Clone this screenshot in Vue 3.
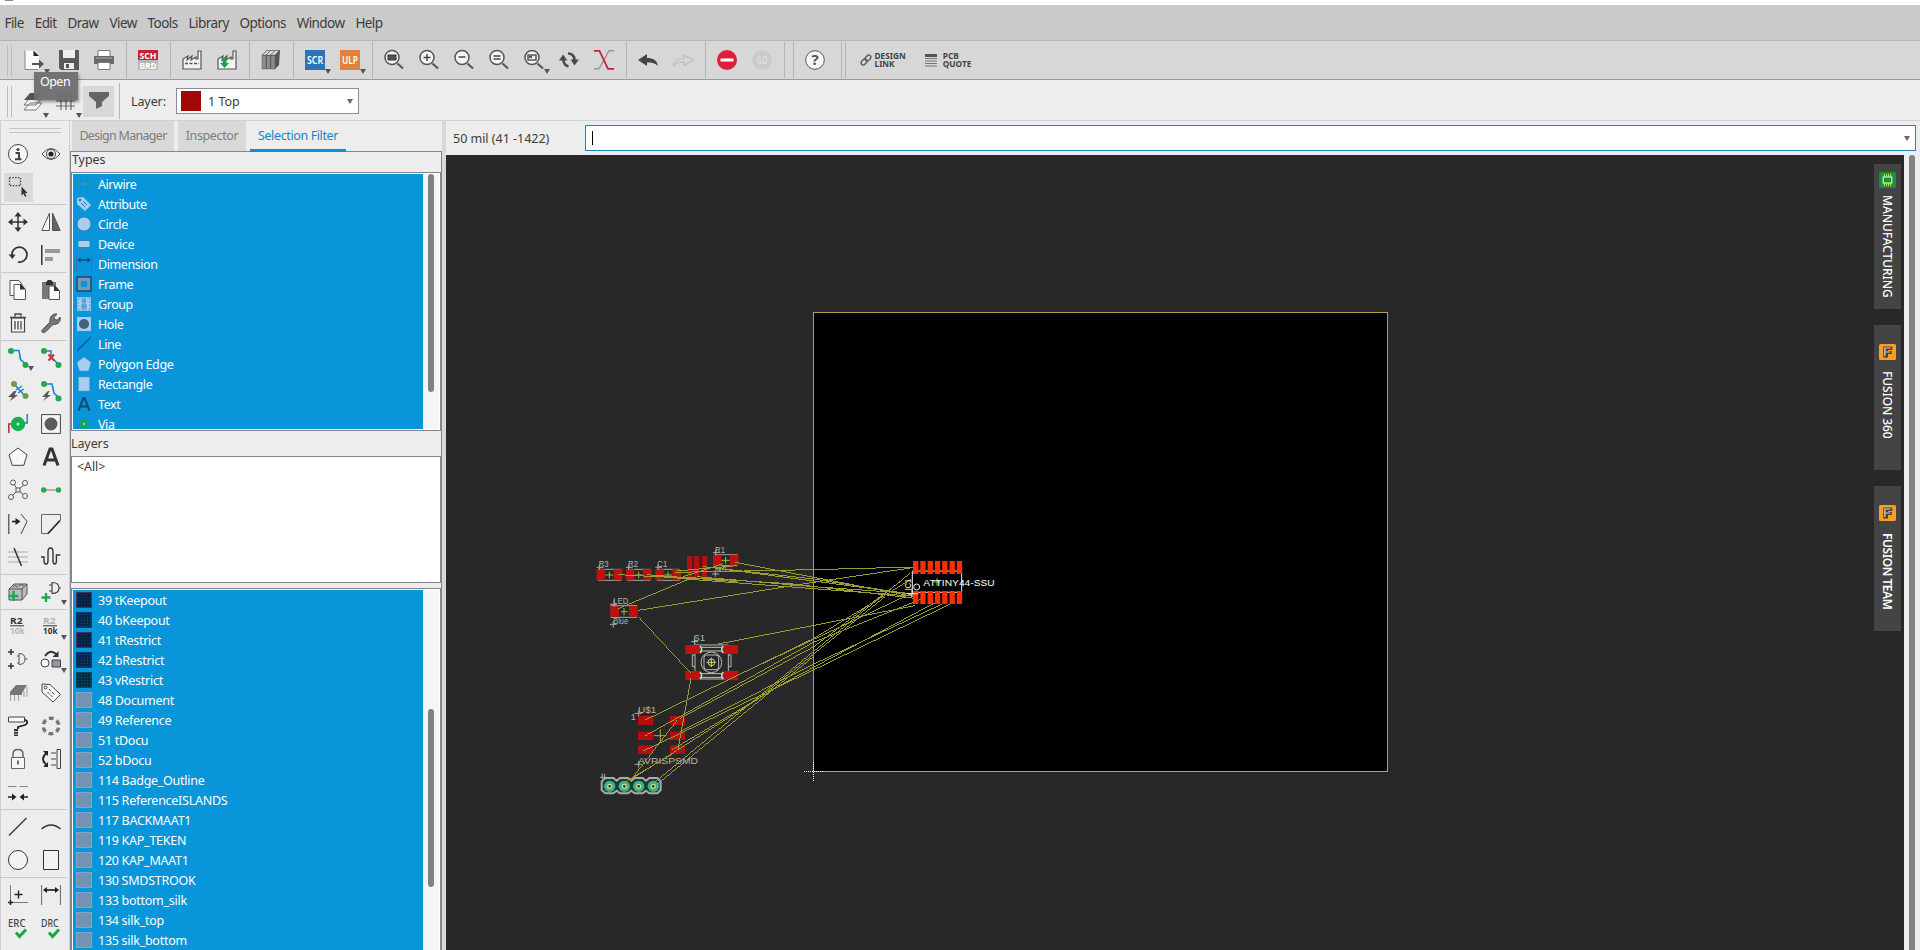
<script setup>
const menus = ['File', 'Edit', 'Draw', 'View', 'Tools', 'Library', 'Options', 'Window', 'Help']

const lens = '<path d="M13.5 13.5l5.5 5" stroke="#555" stroke-width="2"/><circle cx="8" cy="7.500" r="7" fill="#f4f4f4" stroke="#555" stroke-width="1.500"/>'
const green = (x, y, r = 3) => `<circle cx="${x}" cy="${y}" r="${r}" fill="#22a84e"/>`
const factory = '<path d="M1 19V9l5-3-1 4 5-4-1 4 5-3v2h2V1h3v18z" fill="#f3f3f3" stroke="#555" stroke-width="1.200"/>'
const label = (x, y, size, w, fill, t, weight = 700) =>
  `<text x="${x}" y="${y}" font-size="${size}" font-weight="${weight}" fill="${fill}" textLength="${w}" lengthAdjust="spacingAndGlyphs">${t}</text>`
const check = '<path d="M8 14.500l3.500 4L18 11.500" fill="none" stroke="#19a64b" stroke-width="3"/>'

const icons = {
  open: '<path d="M1 .5h10l4 5v14H1z" fill="#fbfbfb"/><path d="M1 .5v19h13" fill="none" stroke="#888"/><path d="M9.500 .5l5.500 5.500H9.500z" fill="#222"/><path d="M8 13h7v-3.500l5 4.500-5 4.500V15H8z" fill="#555"/>',
  save: '<path d="M0 0h20v20H2l-2-2z" fill="#595959"/><path d="M4 0h12v8H4zM5 13h10v6H5z" fill="#eee"/><path d="M7 14h3v4H7z" fill="#555"/>',
  print: '<path d="M4 .5h12v6H4z" fill="#fff" stroke="#777"/><path d="M0 6h20v8H0z" fill="#6a6a6a"/><path d="M2 8h16" stroke="#aaa"/><path d="M4 12.500h12v7H4z" fill="#fff" stroke="#777"/>',
  sch: '<path d="M0 0h20v10H0z" fill="#c8202c"/><path d="M0 10h20v10H0z" fill="#b9b9b9"/>' + label(1.5, 8.6, 9.5, 17, '#fff', 'SCH') + label(1.5, 18.6, 9.5, 17, '#fff', 'BRD'),
  fac1: factory + '<path d="M3 13.500h14" stroke="#555" stroke-width="1.500" stroke-dasharray="3 1.500"/>',
  fac2: factory + '<path d="M5.500 8h4v5H12l-4.500 5L3 13h2.500z" fill="#1aa64a"/>',
  books: '<path d="M1 5l5-5h13l-1 15-4 4H1z" fill="#555"/><path d="M1.500 5l4.500-4.500h12L14 5z" fill="#ddd" stroke="#666" stroke-width=".5"/><path d="M1 5.500h4V19H1zM5.500 5.500h4V19h-4zM10 5.500h4V19h-4z" fill="#8c8c8c" stroke="#555" stroke-width=".5"/><path d="M5 5L9.500.5M9.500 5L14 .5" stroke="#666"/>',
  scr: '<path d="M0 0h20v20H0z" fill="#2d72ba"/>' + label(2, 13.6, 10, 16, '#fff', 'SCR', 600),
  ulp: '<path d="M0 0h20v20H0z" fill="#e0823b"/>' + label(2, 13.6, 10, 16, '#fff', 'ULP', 600),
  zfit: lens + '<path d="M4 5h8v5H4z" fill="#555" stroke="#333"/>',
  zin: lens + '<path d="M4.500 7.500h7M8 4v7" stroke="#444" stroke-width="1.500"/>',
  zout: lens + '<path d="M4.500 7h7" stroke="#444" stroke-width="1.500"/>',
  zeq: lens + '<path d="M4.500 6h7M4.500 9h7" stroke="#444" stroke-width="1.500"/>',
  zsel: lens + '<path d="M4 5h8v5H4z" fill="#eee" stroke="#555" stroke-width="1.500"/><path d="M5 6h3v2H5z" fill="#555"/>',
  refresh: '<path d="M9.500 16.500Q4.500 15 4.300 9.500M9 3.500Q15.200 3.500 15.700 10.500" fill="none" stroke="#4a4a4a" stroke-width="2.600"/><path d="M0 10.500h8.500L4 4.500zM11.500 9.500H20l-4.500 6z" fill="#4a4a4a"/>',
  cross: '<path d="M20 .8h-5l-10 18H0" fill="none" stroke="#999" stroke-width="1.500"/><path d="M0 .8h5.500l8.500 18h6" fill="none" stroke="#d02030" stroke-width="1.800"/>',
  undo: '<path d="M0 10l9-6v4c6 0 10 2 11 8-3-3-6-3.500-11-3.500V16z" fill="#444"/>',
  redo: '<path d="M20 10l-9-5v3.500C5 8.500 2 10 .5 15.500 4 12.500 7 12 11 12v3.500z" fill="none" stroke="#bcbcbc" stroke-width="1.200"/>',
  stop: '<circle cx="10" cy="10" r="10" fill="#dc1f3b"/><path d="M3.500 10h13" stroke="#fff" stroke-width="3"/>',
  go: '<circle cx="10" cy="10" r="9.800" fill="#cbcbcb"/>' + label(4.5, 13.6, 10, 11, '#dedede', 'GO', 600),
  help: '<circle cx="10" cy="10" r="9.300" fill="#f7f7f7" stroke="#555"/>' + label(6.4, 15, 14, 7.2, '#555', '?'),
  layers: '<path d="M1 19l6-7h12l-6 7zM1 14l6-7h12l-6 7z" fill="#f5f5f5" stroke="#777"/><path d="M1 9l6-7h12l-6 7z" fill="#555"/>',
  grid: '<path d="M5 1v18M10 1v18M15 1v18M0 5h19M0 10h19M0 15h19" stroke="#666" stroke-width="1.200" fill="none"/>',
  funnel: '<path d="M0 1h20v4l-7 6v4l-6 3v-7L0 5z" fill="#656565"/>',
  info: '<circle cx="10" cy="10" r="9.500" fill="#f7f7f7" stroke="#444"/><circle cx="10" cy="5.500" r="1.600" fill="#444"/><path d="M7.500 9H11v6M7 15.200h6.500" stroke="#444" stroke-width="2" fill="none"/>',
  eye: '<path d="M1 10Q10-1 19 10 10 21 1 10z" fill="#f7f7f7" stroke="#444"/><circle cx="10" cy="10" r="4.500" fill="none" stroke="#555" stroke-width="1.200"/><circle cx="10" cy="10" r="2.600" fill="#222"/>',
  select: '<path d="M1.500 .7h11v8h-11z" fill="none" stroke="#444" stroke-width="1.300" stroke-dasharray="1.500 1.300"/><path d="M13.500 9.500v9l2-1.800 1.500 3 1.500-.8-1.500-2.800h2.500z" fill="#333"/>',
  move: '<path d="M2 10h16M10 2v16" stroke="#333" stroke-width="1.500"/><path d="M10 0l3.500 4.500h-7zM10 20l3.500-4.500h-7zM0 10l4.500-3.500v7zM20 10l-4.500-3.500v7z" fill="#333"/>',
  mirror: '<path d="M8.500 1v17.500H.8z" fill="#f7f7f7" stroke="#555"/><path d="M11.500 1v17.500h7.700z" fill="#666" stroke="#555"/>',
  rotate: '<path d="M4 10.500a7.500 7.500 0 1 1 6 6.500" fill="none" stroke="#333" stroke-width="1.700"/><path d="M.5 9.500h7l-3 4.500z" fill="#333"/>',
  align: '<path d="M.8 0v20" stroke="#333" stroke-width="1.500"/><path d="M4 4h15v4H4zM4 12h8v4H4z" fill="#999"/>',
  copy: '<path d="M2 .5h9l3 4v11H2z" fill="#fafafa" stroke="#555"/><path d="M6 4.500h7l4.500 5v10H6z" fill="#fafafa" stroke="#555"/><path d="M12 4.500h1.500l4 5H12z" fill="#333"/>',
  paste: '<path d="M1 2h14v17H1z" fill="#777"/><path d="M5 2l2-2h3l2 2v3H5z" fill="#333"/><path d="M8 6h6l4.500 5v8.500H8z" fill="#fafafa" stroke="#555"/><path d="M13 6h1.500l4 5H13z" fill="#333"/>',
  trash: '<path d="M3.500 5h13v14h-13z" fill="#f5f5f5" stroke="#444" stroke-width="1.200"/><path d="M2 4.500h16M7 3.500V1h6v2.500M7 8v8.500M10 8v8.500M13 8v8.500" stroke="#444" stroke-width="1.300" fill="none"/>',
  wrench: '<path d="M1 17l8-8c-1-5 3-9 7-8l-3 3.500 1 2 2.500.5L19 4c1.500 4-2 8-7 7.500l-8 8c-3 .5-4-1-3-2.500z" fill="#777" stroke="#444" stroke-width=".8"/>',
  route: '<path d="M2 2.500h9l1.500 9 6 5" fill="none" stroke="#1b82d0" stroke-width="1.600"/>' + green(3, 3) + green(17.500, 17),
  rip: '<path d="M2 3h8v6l7 7" fill="none" stroke="#1b82d0" stroke-width="1.600"/>' + green(3, 3) + green(17.500, 17) + '<path d="M7.500 6.500l5.500 6M13 6.500l-5.500 6" stroke="#e8232c" stroke-width="2"/>',
  fan: '<path d="M6 3l11 12" stroke="#1b82d0" stroke-width="1.500"/><path d="M8 9l6-4M10 12l6-4" stroke="#1b82d0" stroke-width="1.500"/><circle cx="6" cy="3" r="3" fill="#6d9b50"/><circle cx="17.500" cy="15" r="3" fill="#6d9b50"/><path d="M6 10l-6 6h4l-2 4 8-6H6.500l2-4z" fill="#555"/>',
  auto: '<path d="M3 3h8l2 9 5 5" fill="none" stroke="#1b82d0" stroke-width="1.600"/>' + green(3, 3) + green(17.500, 17.500) + '<path d="M7 10l-6 6h4l-3 4 8-6H6.500l2-4z" fill="#555"/>',
  via: '<path d="M.8 19v-9H5" stroke="#c8202c" stroke-width="1.500" fill="none"/><path d="M15 9h4.200V0" stroke="#1b82d0" stroke-width="1.500" fill="none"/><circle cx="10" cy="10" r="7.200" fill="#16b14d"/><circle cx="10" cy="10" r="1.500" fill="#cdf3d8"/>',
  hole: '<path d="M.6.6h18.800v18.800H.6z" fill="#f5f5f5" stroke="#444"/><circle cx="10" cy="10" r="6.500" fill="#5c5c5c"/>',
  poly: '<path d="M10 1l9 6.800-3.200 10.500H4.200L1 7.800z" fill="#f7f7f7" stroke="#444"/>',
  text: '<path d="M3 18.500L9 2h2l6 16.500M5.500 13h9" fill="none" stroke="#333" stroke-width="3"/>',
  net: '<path d="M5 3l5 7 8-7M10 10l-7 7M10 10l7 6" stroke="#555" fill="none"/><g fill="#f7f7f7" stroke="#555"><circle cx="5" cy="2.500" r="2.500"/><circle cx="17" cy="3" r="2.500"/><circle cx="3" cy="17" r="2.500"/><circle cx="17" cy="16" r="2.500"/><path d="M8 8h4v4H8z"/></g>',
  signal: '<path d="M2 10h16" stroke="#b09a90" stroke-width="1.500"/>' + green(2.700, 10, 2.700) + green(17.500, 10, 2.700),
  arrowIn: '<path d="M.8 0v20" stroke="#444" stroke-width="1.200"/><path d="M13 0l6 7.500L13 20" fill="none" stroke="#444"/><path d="M4 7.500h4" stroke="#222" stroke-width="1.600"/><path d="M7.500 4l5 3.500-5 3.500z" fill="#222"/>',
  miter: '<path d="M19.500 6.500v-6H.5v19H7" fill="none" stroke="#666"/><path d="M7 19.500l12-13" stroke="#222" stroke-width="1.700"/>',
  split: '<path d="M0 5h20M0 10h20M0 15h20" stroke="#aaa"/><path d="M6 1l7.500 18" stroke="#333" stroke-width="1.500"/>',
  meander: '<path d="M0 10h3v4q0 3 2 3t2-3V5q0-4 2.500-4T12 5v9q0 3 1.700 3t1.700-3V8h4" fill="none" stroke="#333" stroke-width="1.400"/>',
  addpart: '<path d="M1 7l5-5h13v10l-5 6H1z" fill="#bbb" stroke="#555"/><path d="M1 7h13l5-5M14 7v11" fill="none" stroke="#555"/><path d="M5 5q2-3 5 0M11 4q2-3 5 0" stroke="#555" fill="none"/><path d="M5.500 9v10M.5 14h10" stroke="#22a84e" stroke-width="2.500"/>',
  addgate: '<path d="M8 3h3M8 9h3M11 .5v11q7 0 7-5.500t-7-5.500zM18 6h2" fill="none" stroke="#444" stroke-width="1.200"/><path d="M5 11v9M.5 15.500h9" stroke="#22a84e" stroke-width="2.300"/>',
  name: label(2, 7.5, 9, 12.5, '#333', 'R2') + '<path d="M2 9.800h14" stroke="#333"/>' + label(2, 18, 8.5, 14.5, '#b5b5b5', '10k'),
  value: label(2, 7.5, 9, 12.5, '#b5b5b5', 'R2') + '<path d="M2 9.800h14" stroke="#333"/>' + label(2, 18, 8.5, 14.5, '#333', '10k'),
  gate2: '<path d="M9 7h2M9 14h2M11 4.500v11q6 0 6-5.500t-6-5.500zM17 10h2.500" fill="none" stroke="#555"/><path d="M3 0v6M0 3h6M3 14v6M0 17h6" stroke="#333" stroke-width="1.500"/>',
  replace: '<path d="M4 7q6-8 12-1" fill="none" stroke="#333" stroke-width="2"/><path d="M17.500 2v6h-6z" fill="#333"/><circle cx="4" cy="14" r="4" fill="#fafafa" stroke="#444"/><path d="M11 11h8.500v7H11z" fill="#8d99a3" stroke="#444"/>',
  ic: '<path d="M2 9l6-7h11l-5 8z" fill="#777"/><path d="M2 9h12v3H2z" fill="#777"/><path d="M2.500 12v6M6.500 12v6M10.500 12v6M16 8v6M19 4v10" stroke="#aaa" stroke-width="1.200"/>',
  tag: '<path d="M1 1l8 .5 10.500 10L12 19 1 9z" fill="#f7f7f7" stroke="#444"/><circle cx="4.500" cy="4.500" r="1.500" fill="none" stroke="#444"/><path d="M8 6l6 6M6.500 9l5.500 5.500" stroke="#444" stroke-dasharray="3 1"/>',
  paint: '<path d="M.5 1h16v5H.5z" fill="#f7f7f7" stroke="#444"/><path d="M16.500 3.500Q22 6 17 9l-7 2v2" fill="none" stroke="#222" stroke-width="1.800"/><path d="M8 13v7" stroke="#333" stroke-width="4" stroke-dasharray="2 .7"/>',
  ring: '<circle cx="10" cy="10" r="7.800" fill="none" stroke="#777" stroke-width="3.400" stroke-dasharray="4.800 3.370" stroke-dashoffset="-1.700"/>',
  lock: '<path d="M5 9V5q0-4.500 5-4.500T15 5v4" fill="none" stroke="#666" stroke-width="1.500"/><path d="M3.500 8.500h13v11h-13z" fill="#f7f7f7" stroke="#666"/><path d="M10 11.500v4" stroke="#444" stroke-width="1.500"/>',
  swap: '<path d="M5.500 4Q-1.500 10 5.500 16" fill="none" stroke="#222" stroke-width="1.800"/><path d="M2 2h5v5zM2 18h5v-5z" fill="#222"/><path d="M16 .5h3.500v19H16z" fill="none" stroke="#444"/><path d="M10 4h6M10 10h6M10 16h6" stroke="#999" stroke-width="1.800"/>',
  optimize: '<path d="M0 4.500h8.500M11.500 4.500H20" stroke="#888" stroke-width="1.200"/><path d="M0 15h5M15 15h5" stroke="#222" stroke-width="1.600"/><path d="M4 11.500l4.500 3.500L4 18.500zM16 11.500L11.500 15l4.500 3.500z" fill="#222"/>',
  line: '<path d="M1 18.500L18.500 1" stroke="#333" stroke-width="1.300"/>',
  arc: '<path d="M.5 12Q10 4 19.500 12" fill="none" stroke="#333" stroke-width="1.300"/>',
  circle: '<circle cx="10" cy="10" r="9.500" fill="#f3f3f3" stroke="#333"/>',
  rect: '<path d="M2.500.5h15v19h-15z" fill="#f3f3f3" stroke="#333"/>',
  origin: '<path d="M2.500 0v20M0 17.500h20" stroke="#777"/><path d="M2.500 15v5M0 17.500h5M10.500 5.500v8M6.500 9.500h8" stroke="#222" stroke-width="1.400"/>',
  dim: '<path d="M.6 0v20M19.400 0v20" stroke="#666"/><path d="M3 5h14" stroke="#222" stroke-width="1.700"/><path d="M2 5l4-3v6zM18 5l-4-3v6z" fill="#222"/>',
  erc: label(0, 9, 11.5, 17.5, '#444', 'ERC', 500) + check,
  drc: label(0, 9, 11.5, 17.5, '#444', 'DRC', 500) + check,
}

const mainTools = [
  { n: 'open', drop: true }, 'save', 'print', '|', 'sch', '|', 'fac1', 'fac2', '|', 'books', '|',
  { n: 'scr', drop: true }, { n: 'ulp', drop: true }, '|', 'zfit', 'zin', 'zout', 'zeq', { n: 'zsel', drop: true },
  'refresh', 'cross', '|', 'undo', 'redo', '|', 'stop', 'go', '|', '|', 'help',
].map((t) => (typeof t === 'string' ? { n: t } : t))

const sideGroups = [
  ['info', 'eye', 'select', ''],
  ['move', 'mirror', 'rotate', 'align'],
  ['copy', 'paste', 'trash', 'wrench'],
  ['route+', 'rip', 'fan', 'auto', 'via', 'hole', 'poly', 'text', 'net', 'signal', 'arrowIn', 'miter', 'split', 'meander'],
  ['addpart', 'addgate+'],
  ['name', 'value+', 'gate2', 'replace+', 'ic', 'tag', 'paint', 'ring', 'lock', 'swap', 'optimize', ''],
  ['line', 'arc', 'circle', 'rect'],
  ['origin', 'dim', 'erc', 'drc'],
].map((g) => g.map((s) => ({ n: s.replace('+', ''), drop: s.endsWith('+') })))

const types = [
  ['Airwire', '<path d="M3 7h8" stroke="#4f8fb8" stroke-width="1.500"/><circle cx="2" cy="7" r="2" fill="#159a86"/><circle cx="12" cy="7" r="2" fill="#159a86"/>'],
  ['Attribute', '<path d="M0 1l6-1 8 8-6 6-8-7z" fill="#a9cdee"/><circle cx="3" cy="3" r="1.200" fill="#1673b8"/><path d="M6 4l4 4M4 6l4 4" stroke="#1a6dab"/>'],
  ['Circle', '<circle cx="7" cy="7" r="7" fill="#a9cdee" stroke="#2a72ac" stroke-width=".8"/>'],
  ['Device', '<path d="M3 2v10M5.700 2v10M8.400 2v10M11 2v10" stroke="#3c7fb5" stroke-width="1.500"/><path d="M1.500 4h11v6h-11z" fill="#a9cdee"/>'],
  ['Dimension', '<path d="M-.5-1v16M14.500-1v16" stroke="#2c77b0"/><path d="M2 3h10" stroke="#0b4a7a" stroke-width="1.500"/><path d="M0 3l3.500-2.500v5zM14 3l-3.500-2.500v5z" fill="#0b4a7a"/>'],
  ['Frame', '<path d="M2 2h10v10H2z" fill="none" stroke="#7898ba" stroke-width="4"/><path d="M0 0h14v14H0z" fill="none" stroke="#174a75" stroke-width="1.500"/>'],
  ['Group', '<path d="M0 0h14v14H0z" fill="#a9cdee"/><path d="M1 1h12v12H1z" fill="none" stroke="#4f9bd4" stroke-dasharray="2 1"/><circle cx="7" cy="4" r="2.500" fill="#5ba3d6"/><circle cx="7" cy="9.500" r="3" fill="#5ba3d6"/>'],
  ['Hole', '<path d="M0 0h14v14H0z" fill="#a9cdee"/><circle cx="7" cy="7" r="5" fill="#42627f"/>'],
  ['Line', '<path d="M0 14L14 0" stroke="#10568a" stroke-width="1.100"/>'],
  ['Polygon Edge', '<path d="M7 0l7 5.500-2.500 8.500h-9L0 5.500z" fill="#a9cdee" stroke="#5d9ccc" stroke-width=".6"/>'],
  ['Rectangle', '<path d="M1.500 0h11v14h-11z" fill="#a9cdee" stroke="#5d9ccc" stroke-width=".6"/>'],
  ['Text', '<path d="M1.500 13.500L6.500 1h1l5 12.500M3.500 9.500h7" fill="none" stroke="#14456e" stroke-width="2"/>'],
  ['Via', '<path d="M.5 14V7" stroke="#80507e"/><circle cx="7" cy="7" r="5" fill="#10a569"/><circle cx="7" cy="7" r="1.200" fill="#8ed0a8"/>'],
]

const layers = [
  ['39 tKeepout', 'red'], ['40 bKeepout', 'blue'], ['41 tRestrict', 'red'], ['42 bRestrict', 'blue'], ['43 vRestrict', 'green'],
  ...['48 Document', '49 Reference', '51 tDocu', '52 bDocu', '114 Badge_Outline', '115 ReferenceISLANDS', '117 BACKMAAT1',
    '119 KAP_TEKEN', '120 KAP_MAAT1', '130 SMDSTROOK', '133 bottom_silk', '134 silk_top', '135 silk_bottom'].map((t) => [t, 'plain']),
]

const fusionIcon = '<rect width="16" height="16" rx="1.500" fill="#f5a11f"/><path d="M4 2.500h8.500v3.500H8.500v1h3.500v3H8.500v3.500H4z" fill="#4a4036"/><path d="M5.500 12V4H11M6 8h4.500" fill="none" stroke="#d9cfc0" stroke-width="1.200"/>'
const railTabs = [
  { t: 'MANUFACTURING', c: 'mfg', i: '<rect width="16" height="16" rx="1.500" fill="#159040"/><path d="M5 2v12M7 2v12M9 2v12M11 2v12" stroke="#e8d33c"/><rect x="4" y="5" width="8" height="6" fill="#159040" stroke="#b6f0a0" stroke-width="1.300"/>' },
  { t: 'FUSION 360', c: 'f360', i: fusionIcon },
  { t: 'FUSION TEAM', c: 'team', i: fusionIcon },
]

// Board drawing uses three units per screen pixel.
const airwires = [
  [84, 119, 300, 130], [170, 119, 440, 140], [255, 112, 670, 104], [670, 104, 975, 96], [84, 221, 300, 131], [145, 226, 670, 142],
  [670, 142, 975, 97], [145, 245, 303, 415], [303, 430, 264, 643], [320, 125, 670, 155], [340, 95, 670, 132], [670, 132, 975, 180],
  [436, 82, 975, 185], [380, 100, 975, 178], [260, 130, 975, 184], [260, 108, 440, 92], [280, 125, 400, 86],
  [300, 128, 600, 146], [600, 146, 975, 190], [670, 155, 975, 176],
  [385, 327, 975, 212], [166, 555, 670, 311], [670, 311, 960, 135], [166, 602, 670, 322], [670, 322, 1000, 190], [270, 550, 670, 336],
  [440, 422, 975, 170], [270, 590, 670, 388], [160, 648, 670, 405], [670, 405, 1085, 205],
  [670, 388, 1065, 203], [103, 742, 250, 655], [120, 738, 262, 555], [120, 735, 500, 495], [670, 336, 930, 140],
  [190, 745, 670, 350], [670, 350, 960, 115], [205, 745, 670, 365], [500, 495, 885, 185], [245, 645, 590, 440], [590, 440, 1045, 198],
]
const chips = [[20, 103, 'R3'], [108, 103, 'R2'], [196, 103, 'C1'], [369, 59, 'R1']]
const pins = [0, 1, 2, 3, 4, 5, 6].map((i) => 969 + i * 21.9)
</script>

<template>
  <div class="app">
    <div class="title"><i class="mark"></i></div>
    <nav class="menu"><span v-for="m in menus" :key="m">{{ m }}</span></nav>

    <div class="bar main-bar">
      <i class="grip"></i>
      <template v-for="(t, i) in mainTools" :key="i">
        <i v-if="t.n === '|'" class="sep"></i>
        <span v-else class="tool">
          <svg width="20" height="20" viewBox="0 0 20 20" v-html="icons[t.n]"></svg>
          <b v-if="t.drop" class="drop"></b>
        </span>
      </template>
      <i class="sep2"></i>
      <span class="link">
        <svg width="12" height="12" viewBox="0 0 12 12" fill="none" stroke="#555" stroke-width="1.200"><rect x="-3" y="-2" width="6" height="4" rx="2" transform="translate(8 4) rotate(-45) scale(1.100)" /><rect x="-3" y="-2" width="6" height="4" rx="2" transform="translate(4 8) rotate(-45) scale(1.100)" /></svg>
        <span>DESIGN<br />LINK</span>
      </span>
      <span class="link quote">
        <svg width="12" height="13" viewBox="0 0 12 13"><path d="M0 0h12v3H0z" fill="#555" /><path d="M0 4.500h12M0 7h12M0 9.500h12M0 12h12" stroke="#777" /></svg>
        <span>PCB<br />QUOTE</span>
      </span>
    </div>

    <div class="bar sub-bar">
      <i class="grip"></i>
      <span class="tool"><svg width="20" height="20" viewBox="0 0 20 20" v-html="icons.layers"></svg><b class="drop"></b></span>
      <span class="tool"><svg width="20" height="20" viewBox="0 0 20 20" v-html="icons.grid"></svg><b class="drop"></b></span>
      <span class="tool active"><svg width="20" height="20" viewBox="0 0 20 20" v-html="icons.funnel"></svg></span>
      <i class="sep"></i>
      <label>Layer:</label>
      <div class="combo"><i class="swatch"></i><span>1 Top</span><b class="arrow"></b></div>
      <div class="tip">Open</div>
    </div>

    <div class="body">
      <aside class="side">
        <i class="hgrip"></i>
        <div v-for="(g, gi) in sideGroups" :key="gi" class="group">
          <span v-for="(s, i) in g" :key="i" class="cell" :class="{ on: s.n === 'select' }">
            <svg v-if="s.n" width="20" height="20" viewBox="0 0 20 20" v-html="icons[s.n]"></svg>
            <b v-if="s.drop" class="drop"></b>
          </span>
        </div>
      </aside>

      <section class="panel">
        <div class="tabs"><span class="dm">Design Manager</span><span class="insp">Inspector</span><span class="cur">Selection Filter</span></div>
        <div class="frame">
          <h4>Types</h4>
          <div class="list types">
            <ul><li v-for="t in types" :key="t[0]"><svg width="16" height="16" viewBox="-1 -1 16 16" v-html="t[1]"></svg>{{ t[0] }}</li></ul>
            <div class="track"><i class="thumb"></i></div>
          </div>
          <h4 class="lh">Layers</h4>
          <div class="all">&lt;All&gt;</div>
          <div class="list lays">
            <ul><li v-for="l in layers" :key="l[0]"><i class="chip" :class="l[1]"></i>{{ l[0] }}</li></ul>
            <div class="track"><i class="thumb"></i></div>
          </div>
        </div>
      </section>

      <main class="work">
        <div class="cmd"><span>50 mil (41 -1422)</span><div class="entry"><i class="caret"></i><b class="arrow"></b></div></div>
        <div class="stage">
          <div class="canvas">
            <svg class="board" width="1458" height="795" viewBox="446 155 1458 795">
              <rect x="813.500" y="312.500" width="574" height="459" fill="#000" stroke="#b59f4a" />
              <g transform="translate(590 535) scale(.33333)" stroke-width="3" fill="none">
                <g v-for="c in chips" :key="c[2]">
                  <rect :x="c[0] + 6" :y="c[1]" width="66" height="33" stroke="#aaa" />
                  <path :d="`M${c[0]} ${c[1]}h25v33h-25zM${c[0] + 51} ${c[1]}h26v33h-26z`" fill="#c01111" />
                  <path :d="`M${c[0] + 26} ${c[1] + 17}h24M${c[0] + 38} ${c[1] + 7}v20`" stroke="#a5c030" />
                  <path :d="`M${c[0]} ${c[1] - 6}h20M${c[0] + 8} ${c[1] - 14}v16`" stroke="#aaa" />
                  <text :x="c[0] + 6" :y="c[1] - 6" font-size="27" textLength="30" lengthAdjust="spacingAndGlyphs">{{ c[2] }}</text>
                </g>
                <path d="M291 63h16v69h-16zM312 63h16v69h-16zM336 63h16v69h-16z" fill="#b01010" />
                <text x="372" y="111" font-size="22" textLength="38" lengthAdjust="spacingAndGlyphs">3k3</text>
                <path d="M366 117h22M376 106v20" stroke="#aaa" />
                <rect x="64" y="212" width="75" height="35" stroke="#aaa" />
                <path d="M61 213h26v32H61zM117 213h26v32h-26z" fill="#c01111" />
                <path d="M93 230h20M102 219v22" stroke="#a5c030" />
                <text x="70" y="206" font-size="25" textLength="45" lengthAdjust="spacingAndGlyphs">LED</text>
                <text x="70" y="267" font-size="25" textLength="44" lengthAdjust="spacingAndGlyphs">Blue</text>
                <path d="M60 208h20M72 195v20M60 268h20M70 258v20" stroke="#aaa" />

                <text x="310" y="317" font-size="28" textLength="36" lengthAdjust="spacingAndGlyphs">S1</text>
                <path d="M304 320h20M314 310v20M315 330h100v102H315zM315 360h-8v35h8M415 360h8v35h-8" stroke="#bbb" />
                <rect x="342" y="360" width="44" height="44" rx="8" stroke="#bbb" />
                <circle cx="364" cy="382" r="31" stroke="#bbb" />
                <circle cx="364" cy="382" r="10" stroke="#cfd47a" />
                <path d="M350 382h28M364 368v28" stroke="#cfd47a" />
                <path d="M286 330h44v27h-44zM400 330h44v27h-44zM286 408h44v27h-44zM400 408h44v27h-44z" fill="#c01111" />
                <path d="M332 337h66M332 348h66M332 416h66M332 427h66" stroke="#c9c99c" />
                <path d="M330 333q10 10 0 21M400 333q-10 10 0 21M330 411q10 10 0 21M400 411q-10 10 0 21" stroke="#ccc" stroke-width="5" />

                <path d="M144 543h45v27h-45zM144 590h45v25h-45zM144 631h45v26h-45zM240 543h45v27h-45zM240 590h45v25h-45zM240 631h45v26h-45z" fill="#b40e10" />
                <path d="M191 602h38M211 583v38" stroke="#a5b030" />
                <path d="M134 535h22M146 526v18M134 688h22M146 678v20" stroke="#aaa" />
                <text x="144" y="533" font-size="28" textLength="55" lengthAdjust="spacingAndGlyphs">U$1</text>
                <text x="122" y="554" font-size="27">1</text>
                <text x="144" y="687" font-size="29" textLength="180" lengthAdjust="spacingAndGlyphs">AVRISPSMD</text>

                <path d="M46 729h24l10 8 10-8h24l10 8 10-8h24l10 8 10-8h24l10 11v25l-10 10h-24l-10-8-10 8h-24l-10-8-10 8H90l-10-8-10 8H46l-11-10v-25z" stroke="#aaa" stroke-width="6" fill="#1c3a30" />
                <path d="M30 727h20M37 716v16M44 716v16" stroke="#aaa" />
                <g v-for="x in [59, 103, 146, 190]" :key="x"><circle :cx="x" cy="754" r="17" fill="#3cb183" /><circle :cx="x" cy="754" r="6" fill="#21382c" stroke="#c5dd9a" stroke-width="4" /></g>

                <g shape-rendering="crispEdges"><path v-for="(a, i) in airwires" :key="i" :d="`M${a[0]} ${a[1]}L${a[2]} ${a[3]}`" stroke="#9c9c35" /></g>

                <path d="M967 108h148v64H967z" stroke="#eee" />
                <path v-for="x in pins" :key="x" :d="`M${x} 78h16v39h-16zM${x} 168h16v39h-16z`" fill="#ff2d06" />
                <path d="M1030 141h20M1041 130v22" stroke="#9ad02c" />
                <text x="1000" y="152" font-size="28" textLength="214" lengthAdjust="spacingAndGlyphs" class="bright">ATTINY44-SSU</text>
                <text transform="translate(962 166) rotate(-90)" font-size="25" textLength="34" lengthAdjust="spacingAndGlyphs" class="bright">IC1</text>
                <circle cx="980" cy="156" r="9" stroke="#eee" /><path d="M950 176h34M966 160v26" stroke="#eee" />
              </g>
              <path d="M804 771.500h20M813.500 762v20" stroke="#fff" stroke-dasharray="1 1" />
            </svg>
            <div class="rail">
              <div v-for="r in railTabs" :key="r.t" class="rtab" :class="r.c"><svg width="17" height="16" viewBox="0 0 16 16" preserveAspectRatio="none" v-html="r.i"></svg><span>{{ r.t }}</span></div>
            </div>
          </div>
          <div class="vscroll"><i></i></div>
        </div>
      </main>
    </div>
  </div>
</template>

<style>
html, body { overflow: hidden; }
</style>

<style scoped>
* { box-sizing: border-box; }
.app { width: 1920px; height: 950px; overflow: hidden; display: flex; flex-direction: column; font-family: "Noto Sans", sans-serif; font-size: 12.5px; color: #3c3c3c; background: #ededed; }
i, b { display: block; flex: none; }
svg { display: block; flex: none; overflow: visible; }
.title { height: 5px; background: #fff; flex: none; }
.mark { width: 8px; height: 1px; margin-left: 5px; background: #888; }
.menu { height: 36px; flex: none; background: #cbcbcb; border-bottom: 1px solid #b5b5b5; display: flex; align-items: center; gap: 10.900px; padding-left: 4.500px; font-size: 13.500px; letter-spacing: -0.57px; }
.bar { display: flex; flex: none; align-items: center; }
.main-bar { height: 39px; background: #d7d7d7; border-bottom: 1px solid #979797; padding-left: 7px; }
.grip { width: 5px; height: 31px; border: solid #bcbcbc; border-width: 0 1px; }
.main-bar .grip { margin-right: 4.500px; }
.tool { position: relative; width: 35px; height: 31px; display: flex; flex: none; align-items: center; justify-content: center; }
.drop { position: absolute; right: 2px; bottom: 2px; border: solid transparent; border-width: 5px 3px 0; border-top-color: #555; }
.sep { width: 9px; height: 36px; background: linear-gradient(#b4b4b4, #b4b4b4) center / 1px 100% no-repeat; }
.sep2 { width: 5px; height: 36px; border: solid #b4b4b4; border-width: 0 1px; margin-left: 8px; }
.link { display: flex; align-items: center; gap: 3px; margin-left: 14px; font-size: 8.300px; line-height: 8px; font-weight: 700; color: #444; }
.quote { margin-left: 19px; gap: 6px; }
.sub-bar { height: 41px; border-bottom: 1px solid #d2d2d2; padding: 2px 0 0 7px; position: relative; }
.sub-bar .grip { margin-right: 4px; }
.sub-bar .tool { width: 33px; }
.sub-bar .tool .drop { bottom: -1px; right: 0; }
.sub-bar .tool.active { width: 31px; margin: 0 1px; background: #d8d8d8; }
.sub-bar label { margin-left: 7px; width: 45px; letter-spacing: -0.1px; }
.combo { width: 183px; height: 26px; background: #fff; border: 1px solid #8b8f94; display: flex; align-items: center; padding: 0 5px 0 4px; }
.swatch { width: 20px; height: 20px; background: #a00808; margin-right: 7px; }
.arrow { margin-left: auto; border: solid transparent; border-width: 5px 3px 0; border-top-color: #666; }
.tip { position: absolute; left: 34px; top: -8px; width: 44px; height: 28px; background: #6c6c6cf0; color: #fff; text-align: center; line-height: 20px; letter-spacing: -0.5px; padding-right: 2px; box-shadow: 1px 2px 3px #0006; }
.body { flex: 1; min-height: 0; display: flex; }
.side { width: 70px; flex: none; border: solid #cfcfcf; border-width: 0 1px; padding: 7px 0 0; }
.hgrip { height: 5px; margin: 0 8px; border: solid #c4c4c4; border-width: 1px 0; }
.group { display: grid; grid-template-columns: 33px 33px; grid-auto-rows: 33.220px; margin: 0 2px 0 0; border-bottom: 1px solid #c9c9c9; padding-bottom: .4px; }
.hgrip + .group { padding-top: 4.500px; }
.group:last-child { border: 0; }
.cell { position: relative; display: flex; align-items: center; justify-content: center; }
.cell.on { background: #dadada; margin: 2px 1px 2px 3px; padding-right: 2px; }
.cell .drop { right: 0; bottom: 3px; }
.panel { width: 372px; flex: none; display: flex; flex-direction: column; }
.tabs { height: 30px; display: flex; padding-left: 2px; color: #7d7d7d; line-height: 30px; flex: none; letter-spacing: -0.38px; }
.tabs span { background: #d9d9d9; width: 102px; text-align: center; flex: none; }
.tabs .dm { letter-spacing: -0.7px; }
.tabs .insp { width: 68px; margin-left: 4px; }
.tabs .cur { margin-left: 4px; width: 96px; background: none; color: #1787c4; border-bottom: 3px solid #0a93d0; height: 31px; position: relative; }
.frame { flex: 1; min-height: 0; border: 1px solid #85878f; border-bottom: 0; display: flex; flex-direction: column; }
h4 { margin: 0; height: 20px; line-height: 15px; font-size: 12.500px; font-weight: 400; padding-left: 1px; flex: none; letter-spacing: -0.1px; }
h4.lh { height: 25px; line-height: 26px; padding-left: 0; }
.list { display: flex; border: 1px solid #7f8791; padding: 1px; background: #fff; overflow: hidden; flex: none; }
.types { height: 259px; }
.types li { letter-spacing: -0.42px; }
.lays { flex: 1; min-height: 0; margin-top: 5px; border-bottom: 0; padding-bottom: 0; }
ul { list-style: none; margin: 0; padding: 0; flex: 1; background: #0895d9; color: #fff; overflow: hidden; }
li { height: 20px; display: flex; align-items: center; padding-left: 3px; gap: 6px; letter-spacing: -0.27px; white-space: pre; }
.track { width: 16px; background: #f5f5f5; }
.thumb { width: 6px; height: 218px; margin-left: 5px; border-radius: 3px; background: #818181; }
.lays .thumb { height: 178px; margin-top: 119px; }
.all { height: 127px; background: #fff; border: 1px solid #7f8791; padding: 1px 5px; flex: none; letter-spacing: -0.1px; }
.chip { width: 16px; height: 16px; background: #7494b2; border: 1px solid #7fa4d0; }
.chip.red { background: radial-gradient(#123a63 30%, #0b2143 40%) 0 0 / 3px 3px; border-color: #43335e; }
.chip.blue { background: radial-gradient(#0b5088 30%, #06274d 40%) 0 0 / 3px 3px; border-color: #0b3d74; }
.chip.green { background: radial-gradient(#086060 30%, #052a44 40%) 0 0 / 3px 3px; border-color: #0a4a5c; }
.work { flex: 1; min-width: 0; display: flex; flex-direction: column; border-left: 4px solid #d8d8da; }
.cmd { height: 34px; flex: none; display: flex; align-items: flex-start; padding: 4px 4px 0 7px; line-height: 27px; }
.cmd > span { width: 132px; font-size: 12.500px; letter-spacing: -0.02px; }
.entry { flex: 1; height: 26px; background: #fff; border: 1px solid #2584b5; display: flex; align-items: center; padding: 0 5px; box-shadow: 0 0 0 2px #e2f2f6; }
.caret { width: 1px; height: 14px; background: #000; margin-left: 1px; }
.stage { flex: 1; min-height: 0; display: flex; }
.canvas { position: relative; width: 1458px; height: 795px; background: #282828; overflow: hidden; }
.board text { font-family: "Liberation Sans", sans-serif; fill: #b4b4b4; stroke: none; }
.board text.bright { fill: #fff; }
.rail { position: absolute; right: 3px; top: 9px; display: flex; flex-direction: column; gap: 16px; }
.rtab { width: 27px; height: 145px; background: #444; color: #fff; writing-mode: vertical-rl; display: flex; align-items: center; padding-top: 8px; gap: 7px; font-size: 12px; font-weight: 500; white-space: pre; letter-spacing: -0.1px; }
.rtab.f360 { padding-top: 19px; gap: 11px; }
.rtab.team { padding-top: 19px; gap: 12px; letter-spacing: -0.45px; font-weight: 600; }
.vscroll { flex: 1; background: #ededed; }
.vscroll i { width: 6px; height: 100%; margin-left: 5px; background: #828282; border-radius: 3px 3px 0 0; }
</style>
